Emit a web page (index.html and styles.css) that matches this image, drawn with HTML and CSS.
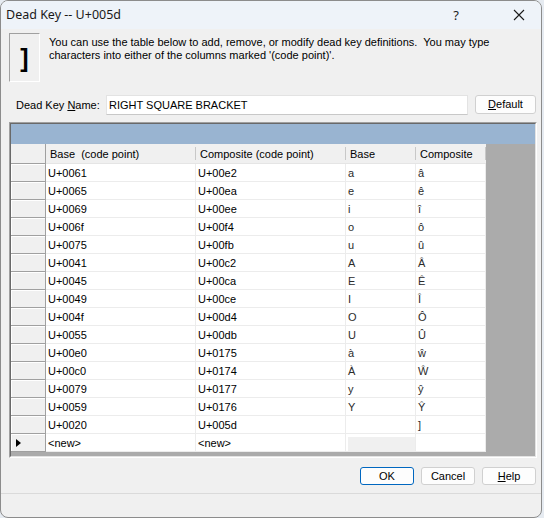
FILE: index.html
```html
<!DOCTYPE html>
<html>
<head>
<meta charset="utf-8">
<link rel="stylesheet" href="styles.css">
</head>
<body>
<div class="window">
  <div class="titlebar">
    <span class="title">Dead Key -- U+005d</span>
    <span class="tb-help">?</span>
    <span class="tb-close"><svg width="12" height="12" viewBox="0 0 12 12"><path d="M1 1L11 11M11 1L1 11" stroke="#1a1a1a" stroke-width="1.1" fill="none"/></svg></span>
  </div>
  <div class="client">
    <div class="intro">
      <div class="iconbox">]</div>
      <p class="desc">You can use the table below to add, remove, or modify dead key definitions.&nbsp; You may type<br>characters into either of the columns marked '(code point)'.</p>
    </div>
    <div class="namerow">
      <span class="label">Dead Key <u>N</u>ame:</span>
      <div class="field">RIGHT SQUARE BRACKET</div>
      <div class="btn btn-default"><u>D</u>efault</div>
    </div>
    <div class="gridctl">
      <div class="gridinner">
        <div class="caption"></div>
        <div class="table">
          <div class="corner"></div>
          <div class="colhead">Base&nbsp; (code point)</div>
          <div class="colhead">Composite (code point)</div>
          <div class="colhead">Base</div>
          <div class="colhead">Composite</div>

          <div class="rowhead"></div><div class="cell">U+0061</div><div class="cell">U+00e2</div><div class="cell ch">a</div><div class="cell ch">â</div>
          <div class="rowhead"></div><div class="cell">U+0065</div><div class="cell">U+00ea</div><div class="cell ch">e</div><div class="cell ch">ê</div>
          <div class="rowhead"></div><div class="cell">U+0069</div><div class="cell">U+00ee</div><div class="cell ch">i</div><div class="cell ch">î</div>
          <div class="rowhead"></div><div class="cell">U+006f</div><div class="cell">U+00f4</div><div class="cell ch">o</div><div class="cell ch">ô</div>
          <div class="rowhead"></div><div class="cell">U+0075</div><div class="cell">U+00fb</div><div class="cell ch">u</div><div class="cell ch">û</div>
          <div class="rowhead"></div><div class="cell">U+0041</div><div class="cell">U+00c2</div><div class="cell ch">A</div><div class="cell ch">Â</div>
          <div class="rowhead"></div><div class="cell">U+0045</div><div class="cell">U+00ca</div><div class="cell ch">E</div><div class="cell ch">Ê</div>
          <div class="rowhead"></div><div class="cell">U+0049</div><div class="cell">U+00ce</div><div class="cell ch">I</div><div class="cell ch">Î</div>
          <div class="rowhead"></div><div class="cell">U+004f</div><div class="cell">U+00d4</div><div class="cell ch">O</div><div class="cell ch">Ô</div>
          <div class="rowhead"></div><div class="cell">U+0055</div><div class="cell">U+00db</div><div class="cell ch">U</div><div class="cell ch">Û</div>
          <div class="rowhead"></div><div class="cell">U+00e0</div><div class="cell">U+0175</div><div class="cell ch">à</div><div class="cell ch">ŵ</div>
          <div class="rowhead"></div><div class="cell">U+00c0</div><div class="cell">U+0174</div><div class="cell ch">À</div><div class="cell ch">Ŵ</div>
          <div class="rowhead"></div><div class="cell">U+0079</div><div class="cell">U+0177</div><div class="cell ch">y</div><div class="cell ch">ŷ</div>
          <div class="rowhead"></div><div class="cell">U+0059</div><div class="cell">U+0176</div><div class="cell ch">Y</div><div class="cell ch">Ŷ</div>
          <div class="rowhead"></div><div class="cell">U+0020</div><div class="cell">U+005d</div><div class="cell ch"></div><div class="cell ch">]</div>
          <div class="rowhead current"><span class="arrow"></span></div><div class="cell">&lt;new&gt;</div><div class="cell">&lt;new&gt;</div><div class="cell ro"><span class="ro-fill"></span></div><div class="cell"></div>
        </div>
      </div>
    </div>
    <div class="buttons">
      <div class="btn btn-ok">OK</div>
      <div class="btn">Cancel</div>
      <div class="btn"><u>H</u>elp</div>
    </div>
  </div>
  <div class="status"></div>
</div>
</body>
</html>
```

FILE: styles.css
```css
html, body {
  margin: 0;
  padding: 0;
}
body {
  width: 544px;
  height: 518px;
  background: #e6ebf1;
  font-family: "Liberation Sans", Arial, sans-serif;
  font-size: 11px;
  color: #000;
  overflow: hidden;
}
.window {
  box-sizing: border-box;
  width: 542px;
  height: 518px;
  border: 1px solid #8c8c8c;
  border-radius: 8px;
  overflow: hidden;
  background: #f0f0f0;
  display: flex;
  flex-direction: column;
}
.titlebar {
  height: 28px;
  flex: none;
  background: #eef3f9;
  display: flex;
  align-items: center;
  padding-left: 5px;
  font-family: "Noto Sans", "Open Sans", sans-serif;
  font-size: 12.5px;
  color: #1a1a1a;
}
.title {
  flex: 1;
  position: relative;
  top: -1px;
}
.tb-help {
  width: 20px;
  text-align: center;
  margin-right: 43px;
  font-size: 13px;
}
.tb-close {
  width: 20px;
  display: flex;
  justify-content: center;
  margin-right: 12px;
}
.client {
  flex: 1;
  padding: 4px 5px 0 8px;
  display: flex;
  flex-direction: column;
}
.intro {
  display: flex;
  height: 49px;
}
.iconbox {
  box-sizing: border-box;
  width: 31px;
  height: 49px;
  border: 1px solid;
  border-color: #a0a0a0 #ffffff #ffffff #a0a0a0;
  display: flex;
  align-items: center;
  justify-content: center;
  font-family: "Liberation Sans", sans-serif;
  font-weight: bold;
  font-size: 25px;
  color: #000;
  padding-top: 2px;
}
.desc {
  margin: 3px 0 0 9px;
  line-height: 13px;
  white-space: nowrap;
}
.namerow {
  margin-top: 13px;
  height: 20px;
  display: flex;
  align-items: center;
}
.label {
  margin-left: 7px;
  width: 90px;
}
.field {
  box-sizing: border-box;
  width: 362px;
  height: 20px;
  background: #fff;
  border: 1px solid #e3e3e3;
  border-bottom-color: #c8c8c8;
  padding: 3px 0 0 2px;
  line-height: 13px;
}
.btn {
  box-sizing: border-box;
  width: 54px;
  height: 18px;
  background: #fdfdfd;
  border: 1px solid #d0d0d0;
  border-radius: 3px;
  display: flex;
  align-items: center;
  justify-content: center;
  line-height: 13px;
}
.btn-default {
  width: 61px;
  height: 19px;
  margin-left: 7px;
  align-self: flex-start;
}
.btn-ok {
  border-color: #0067c0;
}
.gridctl {
  margin-top: 7px;
  box-sizing: border-box;
  width: 528px;
  height: 336px;
  border: 1px solid;
  border-color: #a0a0a0 #ffffff #ffffff #a0a0a0;
}
.gridinner {
  box-sizing: border-box;
  height: 100%;
  border: 1px solid;
  border-color: #696969 #e3e3e3 #e3e3e3 #696969;
  background: #ababab;
}
.caption {
  height: 20px;
  background: #99b4d1;
}
.table {
  display: grid;
  grid-template-columns: 35px 150px 150px 70px 70px;
  grid-template-rows: 20px repeat(16, 18px);
  width: 475px;
}
.corner {
  box-sizing: border-box;
  background: #f0f0f0;
  border-right: 1px solid #a0a0a0;
  border-bottom: 1px solid #a0a0a0;
}
.colhead {
  box-sizing: border-box;
  background: #f0f0f0;
  padding-left: 4px;
  display: flex;
  align-items: center;
  position: relative;
  border-bottom: 1px solid #e5e5e5;
}
.colhead::after {
  content: "";
  position: absolute;
  right: 0;
  top: 3px;
  bottom: 3px;
  width: 1px;
  background: #c8c8c8;
}
.rowhead {
  box-sizing: border-box;
  background: #f0f0f0;
  border-right: 1px solid #a0a0a0;
  border-bottom: 1px solid #a0a0a0;
  box-shadow: inset 1px 1px 0 #ffffff;
  display: flex;
  align-items: center;
}
.arrow {
  width: 0;
  height: 0;
  margin-left: 5px;
  border-top: 4px solid transparent;
  border-bottom: 4px solid transparent;
  border-left: 5px solid #000;
}
.cell {
  box-sizing: border-box;
  background: #fff;
  border-right: 1px solid #ececec;
  border-bottom: 1px solid #ececec;
  padding-left: 2px;
  display: flex;
  align-items: center;
  white-space: nowrap;
}
.ch {
  color: #2b2b2b;
}
.ro {
  padding: 3px 0 0 2px;
  align-items: stretch;
}
.ro-fill {
  flex: 1;
  background: #f0f0f0;
}
.buttons {
  margin-top: 9px;
  display: flex;
  justify-content: flex-end;
  gap: 7px;
}
.status {
  flex: none;
  height: 24px;
  border-top: 1px solid #dadada;
  box-sizing: border-box;
}
```
